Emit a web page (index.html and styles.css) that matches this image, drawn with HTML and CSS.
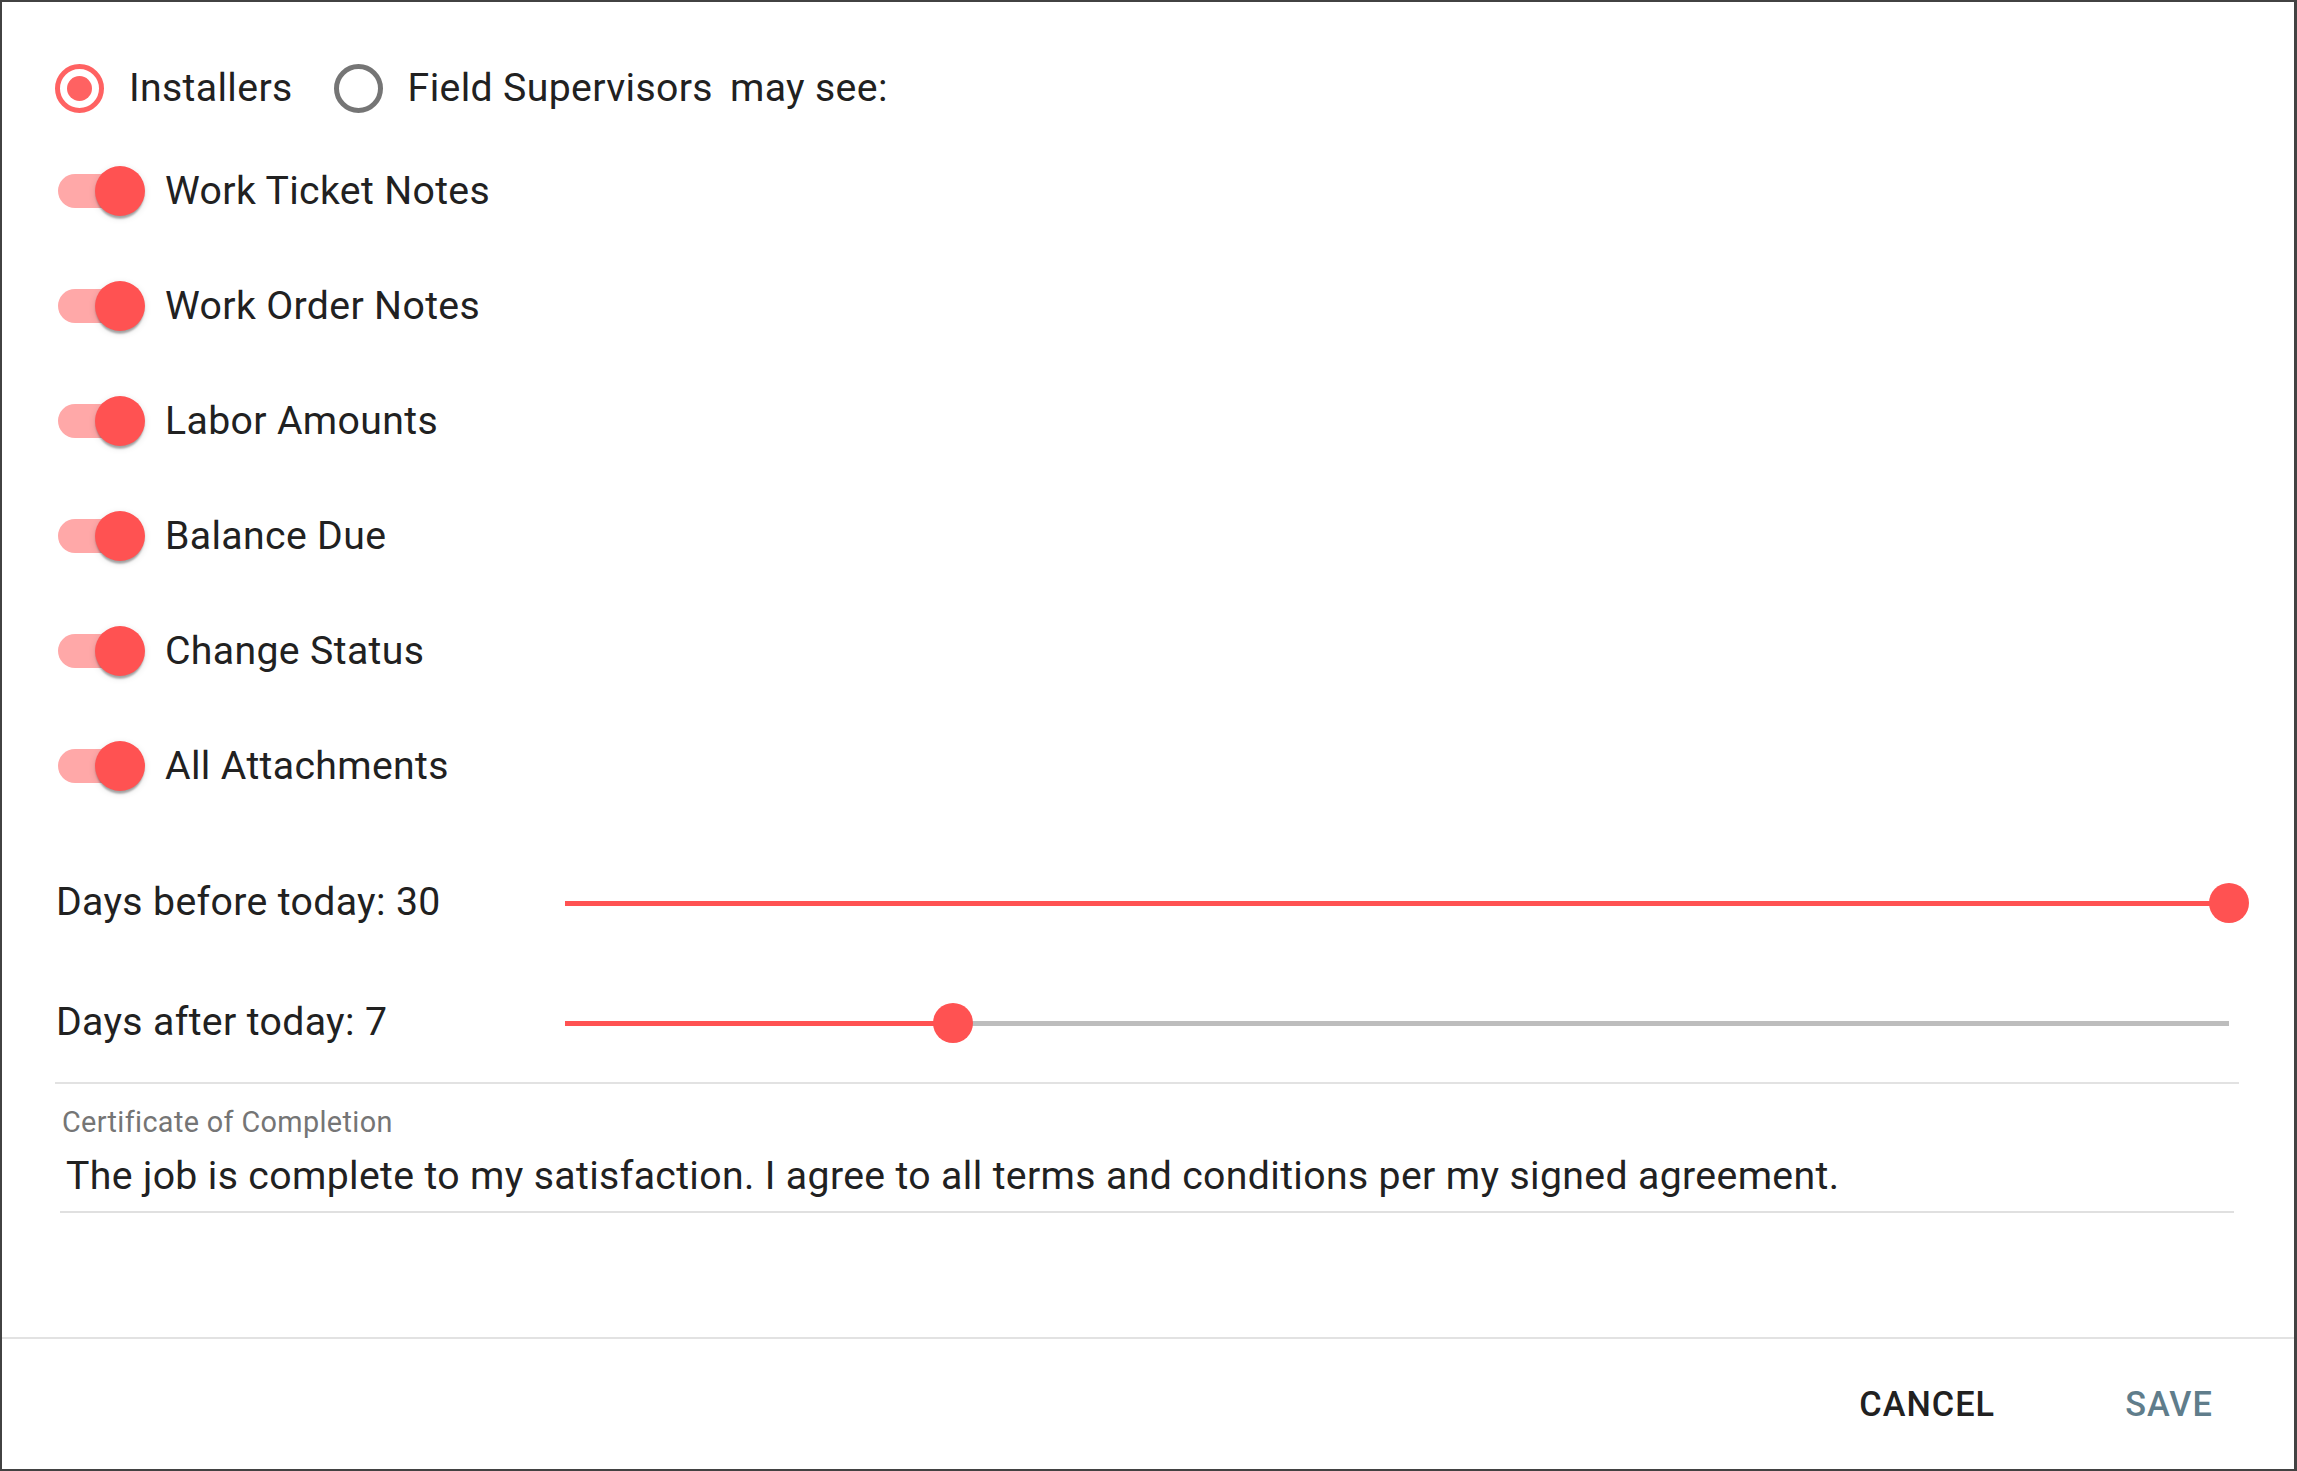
FILE: index.html
```html
<!DOCTYPE html>
<html lang="en">
<head>
    <meta charset="UTF-8">
    <meta name="viewport" content="width=device-width, initial-scale=1.0">
    <title>Visibility Settings</title>
    <link rel="stylesheet" href="styles.css">
</head>
<body>
    <div class="dialog">
        <div class="content">
            <div class="who">
                <label class="radio-option">
                    <span class="radio checked"></span>
                    <span>Installers</span>
                </label>
                <label class="radio-option">
                    <span class="radio"></span>
                    <span>Field Supervisors</span>
                </label>
                <span class="who-suffix">may see:</span>
            </div>

            <ul class="toggles">
                <li class="toggle"><span class="switch"><span class="switch-track"></span><span class="switch-thumb"></span></span><span class="toggle-label">Work Ticket Notes</span></li>
                <li class="toggle"><span class="switch"><span class="switch-track"></span><span class="switch-thumb"></span></span><span class="toggle-label">Work Order Notes</span></li>
                <li class="toggle"><span class="switch"><span class="switch-track"></span><span class="switch-thumb"></span></span><span class="toggle-label">Labor Amounts</span></li>
                <li class="toggle"><span class="switch"><span class="switch-track"></span><span class="switch-thumb"></span></span><span class="toggle-label">Balance Due</span></li>
                <li class="toggle"><span class="switch"><span class="switch-track"></span><span class="switch-thumb"></span></span><span class="toggle-label">Change Status</span></li>
                <li class="toggle"><span class="switch"><span class="switch-track"></span><span class="switch-thumb"></span></span><span class="toggle-label">All Attachments</span></li>
            </ul>

            <div class="ranges">
                <div class="range-row">
                    <span class="range-label">Days before today: 30</span>
                    <div class="slider">
                        <div class="slider-track" style="width: 100%"></div>
                        <div class="slider-thumb" style="left: 100%"></div>
                    </div>
                </div>
                <div class="range-row">
                    <span class="range-label">Days after today: 7</span>
                    <div class="slider">
                        <div class="slider-track" style="width: 23.33%"></div>
                        <div class="slider-thumb" style="left: 23.33%"></div>
                    </div>
                </div>
            </div>

            <div class="divider"></div>

            <div class="field">
                <label class="field-label">Certificate of Completion</label>
                <div class="field-input">The job is complete to my satisfaction. I agree to all terms and conditions per my signed agreement.</div>
            </div>
        </div>

        <div class="actions">
            <button class="btn">Cancel</button>
            <button class="btn btn-save">Save</button>
        </div>
    </div>
</body>
</html>
```

FILE: styles.css
```css
* {
    box-sizing: border-box;
}
body {
    margin: 0;
    font-family: Roboto, "Liberation Sans", sans-serif;
    color: #212121;
    background-color: #fff;
}
.dialog {
    height: 1471px;
    border-style: solid;
    border-color: #424242;
    border-width: 2px 3px 2px 2px;
    display: flex;
    flex-direction: column;
}
.content {
    flex: 1;
    padding: 57px 0 0 54px;
    font-size: 39.2px;
    letter-spacing: 0.36px;
}

/* radio row */
.who {
    display: flex;
    align-items: center;
    height: 58px;
}
.radio-option {
    display: flex;
    align-items: center;
    gap: 25px;
    margin-right: 41px;
}
.radio-option:first-child {
    margin-left: -1px;
}
.radio-option:nth-child(2) {
    margin-right: 17px;
}
.radio {
    width: 49px;
    height: 49px;
    border: 5px solid #757575;
    border-radius: 50%;
    display: flex;
    align-items: center;
    justify-content: center;
}
.radio.checked {
    border-color: #ff6262;
}
.radio.checked::after {
    content: "";
    width: 25px;
    height: 25px;
    border-radius: 50%;
    background-color: #ff6262;
}

/* switches */
.toggles {
    list-style: none;
    margin: 16px 0 0;
    padding: 0;
}
.toggle {
    height: 115px;
    display: flex;
    align-items: center;
}
.switch {
    position: relative;
    width: 87px;
    height: 50px;
    margin-left: 2px;
    display: flex;
    align-items: center;
}
.switch-track {
    width: 82px;
    height: 34px;
    border-radius: 17px;
    background-color: #ffa8a8;
}
.switch-thumb {
    position: absolute;
    right: 0;
    top: 0;
    width: 50px;
    height: 50px;
    border-radius: 50%;
    background-color: #ff5252;
    box-shadow: 0 5px 2px -2px rgba(0, 0, 0, 0.2), 0 2px 2px 0 rgba(0, 0, 0, 0.14), 0 2px 7px 0 rgba(0, 0, 0, 0.12);
}
.toggle-label {
    margin-left: 20px;
}

/* sliders */
.ranges {
    margin-top: 19px;
}
.range-row {
    height: 120px;
    display: flex;
    align-items: center;
}
.range-label {
    width: 509px;
    flex-shrink: 0;
}
.slider {
    flex: 1;
    position: relative;
    height: 5px;
    margin: 2px 65px 0 0;
    background-color: #bdbdbd;
}
.slider-track {
    height: 100%;
    background-color: #ff5252;
}
.slider-thumb {
    position: absolute;
    top: 50%;
    width: 40px;
    height: 40px;
    margin: -20px 0 0 -20px;
    border-radius: 50%;
    background-color: #ff5252;
}

.divider {
    height: 2px;
    margin: 0 55px 0 -1px;
    background-color: #e2e2e2;
}

/* text field */
.field {
    margin: 24px 60px 0 4px;
}
.field-label {
    display: block;
    padding-left: 2px;
    font-size: 28.8px;
    line-height: 28.8px;
    color: #757575;
    letter-spacing: 0.36px;
}
.field-input {
    margin-top: 20px;
    padding: 0 0 15px 6px;
    font-size: 39.2px;
    line-height: 39.2px;
    border-bottom: 2px solid #e0e0e0;
}

/* footer */
.actions {
    height: 132px;
    border-top: 2px solid #e2e2e2;
    display: flex;
    align-items: center;
    justify-content: flex-end;
    gap: 78px;
    padding: 0 48px 0 0;
}
.btn {
    min-width: 154px;
    padding: 14px 19px;
    border: 0;
    background: none;
    font-family: Roboto, "Liberation Sans", sans-serif;
    font-size: 34.3px;
    font-weight: 500;
    letter-spacing: 0.98px;
    text-transform: uppercase;
    color: #212121;
    cursor: pointer;
}
.btn-save {
    color: #607d8b;
}
```
